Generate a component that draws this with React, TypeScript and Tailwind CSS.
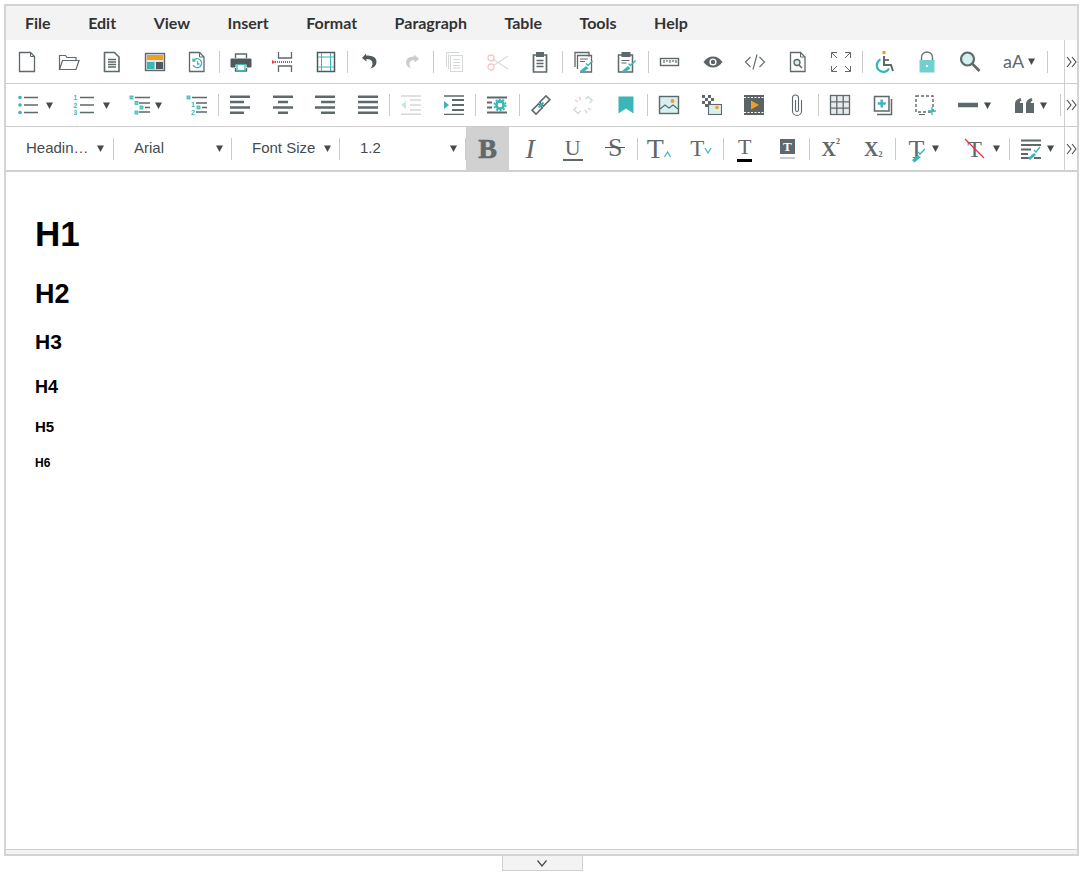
import React from "react";

const G = "#5f686a";
const T = "#3bb5b8";
const O = "#f0a020";
const R = "#ec3f52";

function Svg({ children, size = 24 }: { children: React.ReactNode; size?: number }) {
  return (
    <svg width={size} height={size} viewBox="0 0 24 24" fill="none" stroke={G} strokeWidth="1" className="shrink-0 block">
      {children}
    </svg>
  );
}

const icons: Record<string, React.ReactNode> = {
  file: <><path d="M4.500 2.500h11l4 4v15h-15z" strokeWidth="1.300" /><path d="M15.500 2.500v4h4" /></>,
  open: <><path d="M1.500 19.500v-14h6l1.500 2h9v3" strokeWidth="1.200" /><path d="M1.500 19.500l3-9h16.500l-3 9z" strokeWidth="1.200" /></>,
  doc: <><path d="M4.500 2.500h10l4.500 4.500v14.500h-14.500z" strokeWidth="1.600" /><path d="M8 9.500h8M8 12h8M8 14.500h8M8 17h8" strokeWidth="1.300" /></>,
  template: <><rect x="2.500" y="3.500" width="19" height="17" fill="#e4e4e4" strokeWidth="1.400" /><rect x="4" y="5" width="16" height="5" fill={O} stroke="none" /><rect x="4" y="12" width="7.500" height="7" fill={T} stroke="none" /><rect x="13" y="12" width="7" height="7" fill="#4f585a" stroke="none" /></>,
  restore: <><path d="M4.500 2.500h10l4.500 4.500v14.500h-14.500z" strokeWidth="1.300" /><path d="M14.500 2.500v4.500h4.500" /><path d="M8.500 10.500a4.500 4.500 0 1 1-.5 4.500M8 8.500v2.500h2.500M12.500 11v3h2" stroke={T} strokeWidth="1.300" /></>,
  print: <><path d="M6.500 8V4h11v4" strokeWidth="1.400" /><path d="M6.500 18v3h11v-3" strokeWidth="1.400" /><path d="M2 9h20v8h-4v-3H6v3H2z" fill="#4f585a" stroke="#4f585a" /><rect x="8" y="14.500" width="8" height="6" fill="#fff" stroke={T} strokeWidth="1.200" /></>,
  pagebreak: <><path d="M7.500 2v6h13V2M7.500 22v-6h13v6" strokeWidth="1.300" /><path d="M4 12h17" stroke={R} strokeWidth="2" strokeDasharray="1 1" /><path d="M1 10v4l3.500-2z" fill={R} stroke="none" /></>,
  frame: <><rect x="3.500" y="2.500" width="17" height="19" strokeWidth="1.500" stroke="#4f585a" /><path d="M7.500 3v18M16.500 3v18M4 7h16M4 17h16" stroke={T} /></>,
  undo: <path d="M9 3.500L5 8l4.500 3.500V9c4 0 6 1.500 6 4.500 0 2-1 3.500-2 5 4-1 6-3.500 6-7 0-4-4-6-10.500-6z" fill="#4f585a" stroke="none" />,
  redo: <path d="M14.500 4.500L19 9l-4.500 3.500V10c-3.500 0-5 1.500-5 4 0 2 .8 3.500 1.800 4.500-3.300-1-5.300-3.200-5.300-6 0-4 3.500-6 8.500-6z" fill="#c9cccc" stroke="none" />,
  copy: <g stroke="#d5d8d8"><path d="M3.500 17V2.500h13" /><path d="M5.500 19V4.500h1" /><rect x="7.500" y="5.500" width="12" height="16" /><path d="M10 9.500h7M10 12.500h7M10 15.500h7M10 18h7" /></g>,
  paste: <><path d="M8 5H5.500v17h13V5H16" strokeWidth="1.700" /><rect x="8.500" y="2.500" width="7" height="4" fill={G} /><path d="M8.500 10.500h7M8.500 13.500h7M8.500 16.500h7" strokeWidth="1.300" /></>,
  pastetext: <><path d="M3 17V2.500h14v4" strokeWidth="1.300" /><path d="M5.500 19V5.500H19.500V22H8" strokeWidth="1.300" /><path d="M8 9h8M8 11.500h5" strokeWidth="1" /><path d="M8 21l6-5 2.500 2.500-6 4z" fill={T} stroke="none" /><path d="M14 13.500l2 2 4.500-4.500" stroke={T} strokeWidth="1.500" /></>,
  pasteword: <><path d="M8 5H4.500v17h14V5H16" strokeWidth="1.500" /><rect x="8" y="2.500" width="8" height="4" fill={G} /><path d="M7.500 10.500h8M7.500 13h5" /><path d="M8 21l6-5 2.500 2.500-6 4z" fill={T} stroke="none" /><path d="M14.500 13.500l2 2 5-5" stroke={T} strokeWidth="1.500" /></>,
  ruler: <><rect x="2.500" y="8.500" width="18" height="7" strokeWidth="1.400" /><path d="M6 10v3M9 10v2M12 10v3M15 10v2M18 10v3" strokeWidth="1.200" /></>,
  eye: <><path d="M2.500 12c3-4 6-5.500 9.500-5.500s6.500 1.500 9.500 5.500c-3 4-6 5.500-9.500 5.500s-6.500-1.500-9.500-5.500z" fill="#5b6365" stroke="none" /><circle cx="12" cy="12" r="3.600" fill="#fff" stroke="none" /><circle cx="12" cy="12" r="2.200" fill="#5b6365" stroke="none" /></>,
  code: <path d="M7.500 7L2.500 12l5 5M16.500 7l5 5-5 5M14 4.500L10 19.500" strokeWidth="1.100" />,
  finddoc: <><path d="M4.500 2.500h10l4.500 4.500v14.500h-14.500z" strokeWidth="1.300" /><path d="M14.500 2.500v4.500h4.500" /><circle cx="11" cy="12.500" r="3" strokeWidth="1.300" fill="#d5eeee" /><path d="M13 15l3 3" strokeWidth="1.500" /></>,
  full: <path d="M2.500 8V2.500H8M3 3l5 5M16 2.500h5.500V8M21 3l-5 5M2.500 16v5.500H8M3 21l5-5M21.500 16v5.500H16M21 21l-5-5" strokeWidth="1" />,
  access: <><circle cx="11" cy="2.500" r="1.800" fill={O} stroke="none" /><path d="M11 6v9h7l2 6" stroke={G} strokeWidth="2" /><path d="M11 10h5" stroke={G} strokeWidth="1.800" /><path d="M7.500 9.500a6.500 6.500 0 1 0 8.500 9" stroke={T} strokeWidth="2.200" /></>,
  lock: <><path d="M6.500 11V7.500a5.500 5.500 0 0 1 11 0V11" strokeWidth="1.400" stroke="#6b7476" /><rect x="4.500" y="10" width="15" height="12.500" fill="#72cfcf" stroke="none" /><rect x="11" y="15" width="2" height="2" fill="#fff" stroke="none" /></>,
  search: <><circle cx="9.500" cy="9" r="6.500" fill="#d5eeee" strokeWidth="2.200" /><path d="M14.500 14L21.500 21" strokeWidth="2.600" /></>,
  bullets: <><path d="M9 4.500h14M9 12h14M9 19.500h14" strokeWidth="1.400" /><g fill={T} stroke="none"><circle cx="5" cy="4.500" r="1.800" /><circle cx="5" cy="12" r="1.800" /><circle cx="5" cy="19.500" r="1.800" /></g></>,
  numbers: <><path d="M10 4.500h14M10 12h14M10 19.500h14" strokeWidth="1.400" /><g fill={T} stroke="none" fontSize="6.500" fontWeight="700" fontFamily="Liberation Sans, sans-serif"><text x="3.500" y="7">1</text><text x="3.500" y="14.500">2</text><text x="3.500" y="22">3</text></g></>,
  outline: <><path d="M7 4.500h15M11 10h11M11 19h11M17 14.500h5" strokeWidth="1.400" /><g fill="#7ecfd0" stroke={T} strokeWidth=".8"><rect x="2" y="3" width="3" height="3" /><rect x="7" y="8.500" width="3" height="3" /><rect x="12" y="13" width="3" height="3" /><rect x="7" y="18" width="3" height="3" /></g></>,
  numoutline: <><path d="M7 4.500h15M11 10h11M11 19h11M17 14.500h5" strokeWidth="1.400" /><g fill="#7ecfd0" stroke={T} strokeWidth=".8"><rect x="2" y="3" width="3" height="3" /><rect x="12" y="13" width="3" height="3" /></g><g fill={T} stroke="none" fontSize="7" fontWeight="700" fontFamily="Liberation Sans, sans-serif"><text x="6" y="13.500">1</text><text x="6" y="22">2</text></g></>,
  left: <path d="M2 3.700h20M2 9h14M2 14.500h20M2 19.800h14" strokeWidth="2.500" />,
  center: <path d="M2 3.700h20M7 9h10M2 14.500h20M7 19.800h10" strokeWidth="2.500" />,
  right: <path d="M2 3.700h20M8 9h14M2 14.500h20M8 19.800h14" strokeWidth="2.500" />,
  justify: <path d="M2 3.700h20M2 9h20M2 14.500h20M2 19.800h20" strokeWidth="2.500" />,
  outdent: <><path d="M2 3h20M2 21.300h20M11 7h11M11 12h11M11 17h11" stroke="#d5d8d8" strokeWidth="1.600" /><path d="M7 8v8l-5-4z" fill="#c2e9e9" stroke="none" /></>,
  indent: <><path d="M2 3h20M2 21.300h20" strokeWidth="1.300" /><path d="M10 7h12M10 12h12M10 17h12" strokeWidth="2" /><path d="M2 8v8l5-4z" fill={T} stroke="none" /></>,
  settings: <><path d="M2 4.500h20M2 19.500h20M2 9.500h5M2 14.500h5" strokeWidth="2" /><circle cx="15" cy="12" r="3.600" fill="none" stroke={T} strokeWidth="2.600" /><circle cx="15" cy="12" r="5.600" fill="none" stroke={T} strokeWidth="1.800" strokeDasharray="2 1.500" /></>,
  link: <><rect x="13" y="3.500" width="5.500" height="9" transform="rotate(45 15.750 8)" strokeWidth="1.600" /><rect x="5.500" y="11.500" width="5.500" height="9" transform="rotate(45 8.250 16)" strokeWidth="1.600" /><path d="M9.500 14.500l5-5" stroke={T} strokeWidth="2" /></>,
  unlink: <><path d="M14.500 6l2.500-2.500 4 4L18.500 10" stroke="#d5d8d8" strokeWidth="1.500" /><path d="M9.500 18L7 20.500l-4-4L5.500 14" stroke="#d5d8d8" strokeWidth="1.500" /><path d="M17 15l3 2M14 17l2 3" stroke="#d5d8d8" strokeWidth="1.400" /><path d="M7 9L4 7M10 7L8 4" stroke="#f5c5c9" strokeWidth="1.400" /></>,
  bookmark: <path d="M4.500 3.500h15v17l-7.500-5-7.500 5z" fill={T} stroke="none" />,
  image: <><rect x="2.500" y="3.500" width="19" height="17" fill="#d6efef" strokeWidth="1.400" /><path d="M3 16l5-4 4 3 4-3 5 4" strokeWidth="1.100" /><circle cx="15.500" cy="8" r="2" fill={O} stroke="none" /></>,
  effects: <><g fill={G} stroke="none"><rect x="2" y="2" width="3" height="3" /><rect x="8" y="2" width="3" height="3" /><rect x="5" y="5" width="3" height="3" /><rect x="11" y="5" width="3" height="3" /><rect x="2" y="8" width="3" height="3" /><rect x="8" y="8" width="3" height="3" /><rect x="5" y="11" width="3" height="3" /></g><rect x="8.500" y="11.500" width="13" height="10" fill="#d6efef" strokeWidth="1.100" /><circle cx="17" cy="14.500" r="1.800" fill={O} stroke="none" /></>,
  video: <><rect x="2" y="2" width="20" height="20" fill="#5b6365" stroke="none" /><path d="M2 4.500h20M2 19.500h20" stroke="#fff" strokeWidth="1" strokeDasharray="2 1.500" /><path d="M9 7.500v9l8-4.500z" fill={O} stroke="none" /></>,
  attach: <path d="M16.500 7v11a4.500 4.500 0 0 1-9 0V5a3 3 0 0 1 6 0v12a1.500 1.500 0 0 1-3 0V7" strokeWidth="1.100" />,
  table: <><rect x="2.500" y="2.500" width="19" height="19" fill="#e9ecec" strokeWidth="1.300" /><path d="M8.800 3v18M15.200 3v18M3 8.800h18M3 15.200h18" strokeWidth="1.300" /></>,
  add: <><path d="M20.500 6v15.500H6" strokeWidth="1.500" /><rect x="3.500" y="3.500" width="14.500" height="14.500" fill="#fff" strokeWidth="1.500" /><path d="M10.700 6.500v8M6.700 10.500h8" stroke={T} strokeWidth="2.400" /></>,
  select: <><rect x="3" y="3" width="17" height="16" strokeWidth="1.400" strokeDasharray="3 2" /><path d="M19 14v8M15 18h8" stroke={T} strokeWidth="1.300" /><path d="M6 21.500h6" stroke={G} /></>,
  hr: <path d="M2 12h20" strokeWidth="4.500" />,
  quote: <path d="M3 20V11c0-3 2-5 5.500-6l1 2.500c-1.200.5-1.800 1.200-1.800 2.500H11v10zM14 20V11c0-3 2-5 5.500-6l1 2.500c-1.200.5-1.800 1.200-1.800 2.500H22v10z" fill={G} stroke="none" />,
};

function Serif({ ch, size, bold = true, italic = false }: { ch: string; size: number; bold?: boolean; italic?: boolean }) {
  return (
    <span
      className="font-['Liberation_Serif',serif] leading-none text-[#5f686a]"
      style={{ fontSize: size, fontWeight: bold ? 700 : 400, fontStyle: italic ? "italic" : "normal" }}
    >
      {ch}
    </span>
  );
}

function I({ n }: { n: string }) {
  return <Svg>{icons[n]}</Svg>;
}

function Tri({ className = "ml-[7px]" }: { className?: string }) {
  return (
    <svg width="7" height="7" viewBox="0 0 7 7" className={`shrink-0 ${className}`}>
      <path d="M0 .5h7L3.500 7z" fill="#444b4d" />
    </svg>
  );
}

function Cell({ children, className = "w-[42.5px]" }: { children?: React.ReactNode; className?: string }) {
  return <div className={`flex h-full shrink-0 items-center justify-center ${className}`}>{children}</div>;
}

function Left({ children, className }: { children?: React.ReactNode; className: string }) {
  return <div className={`flex h-full shrink-0 items-center ${className}`}>{children}</div>;
}

function Sep() {
  return <div className="h-[22px] w-px shrink-0 bg-[#cbcbcb]" />;
}

function Cells({ names, className }: { names: string[]; className?: string }) {
  return (
    <>
      {names.map((n) => (
        <Cell key={n} className={className}>
          <I n={n} />
        </Cell>
      ))}
    </>
  );
}

function More() {
  return (
    <div className="ml-auto flex h-full w-[13px] shrink-0 items-center justify-center border-l border-[#cfcfcf]">
      <svg width="11" height="12" viewBox="0 0 11 12" fill="none" stroke="#444b4d" strokeWidth="1.100">
        <path d="M1 1l4 5-4 5M6 1l4 5-4 5" />
      </svg>
    </div>
  );
}

function Sel({ text, className, textClass }: { text: string; className: string; textClass: string }) {
  return (
    <div className={`flex h-full shrink-0 items-center text-[15px] text-[#444c52] ${className}`}>
      <span className={textClass}>{text}</span>
      <Tri className="" />
    </div>
  );
}

const menus = ["File", "Edit", "View", "Insert", "Format", "Paragraph", "Table", "Tools", "Help"];

export default function App() {
  return (
    <div className="h-[873px] w-[1084px] overflow-hidden bg-white pl-[4px] pt-[4px] font-['Liberation_Sans',Arial,sans-serif]">
      <div className="flex h-[852px] w-[1075px] flex-col border-2 border-[#d4d4d4]">
        <div className="flex h-[34px] shrink-0 items-center gap-[37.5px] bg-[#f3f3f3] pl-[19px] font-['Lato',sans-serif] text-[16px] font-bold text-[#333]">
          {menus.map((m) => (
            <span key={m}>{m}</span>
          ))}
        </div>

        <div className="flex h-[44px] shrink-0 items-center border-b border-[#cdcdcd]">
          <Cells names={["file", "open", "doc", "template", "restore"]} />
          <Sep />
          <Cells names={["print", "pagebreak", "frame"]} />
          <Sep />
          <Cells names={["undo", "redo"]} />
          <Sep />
          <Cell><I n="copy" /></Cell>
          <Cell>
            <svg width="24" height="24" viewBox="0 0 24 24" fill="none" stroke="#f5c5c9" strokeWidth="1.300">
              <circle cx="5" cy="8" r="3" />
              <circle cx="5" cy="17" r="3" />
              <path d="M7.500 9.500L22 19M7.500 15.500L22 6" stroke="#d9dcdc" />
            </svg>
          </Cell>
          <Cell><I n="paste" /></Cell>
          <Sep />
          <Cells names={["pastetext", "pasteword"]} />
          <Sep />
          <Cells names={["ruler", "eye", "code", "finddoc", "full"]} className="w-[42.8px]" />
          <Sep />
          <Cells names={["access", "lock", "search"]} />
          <Left className="w-[56px] pl-[12px]">
            <span className="font-['Lato',sans-serif] text-[18px] text-[#5f686a]">aA</span>
            <Tri className="ml-[4px]" />
          </Left>
          <Sep />
          <More />
        </div>

        <div className="flex h-[43px] shrink-0 items-center border-b border-[#cdcdcd]">
          <Left className="w-[56px] pl-[9px]"><I n="bullets" /><Tri className="ml-[7px]" /></Left>
          <Left className="w-[58px] pl-[8px]"><I n="numbers" /><Tri className="ml-[9px]" /></Left>
          <Left className="w-[55px] pl-[8px]"><I n="outline" /><Tri className="ml-[3px]" /></Left>
          <Cell className="w-[43px]"><I n="numoutline" /></Cell>
          <Sep />
          <Cells names={["left", "center", "right", "justify"]} />
          <Sep />
          <Cells names={["outdent", "indent"]} />
          <Sep />
          <Cell><I n="settings" /></Cell>
          <Sep />
          <Cells names={["link", "unlink", "bookmark"]} />
          <Sep />
          <Cells names={["image", "effects", "video", "attach"]} />
          <Sep />
          <Cells names={["table", "add", "select"]} />
          <Left className="w-[56px] pl-[9px]"><I n="hr" /><Tri className="ml-[4px]" /></Left>
          <Left className="w-[57px] pl-[9px]"><I n="quote" /><Tri className="ml-[4px]" /></Left>
          <Sep />
          <More />
        </div>

        <div className="flex h-[45px] shrink-0 items-center border-b-2 border-[#d0d0d0]">
          <Sel text="Headin…" className="w-[107px] pl-[20px]" textClass="w-[71px]" />
          <Sep />
          <Sel text="Arial" className="w-[117px] pl-[20px]" textClass="w-[82px]" />
          <Sep />
          <Sel text="Font Size" className="w-[107px] pl-[20px]" textClass="w-[72px]" />
          <Sep />
          <Sel text="1.2" className="w-[125px] pl-[20px]" textClass="w-[90px]" />
          <Sep />
          <Cell className="w-[43px] bg-[#d1d1d1]">
            <span className="font-['Liberation_Serif',serif] text-[28px] font-bold leading-none text-[#5f686a] [-webkit-text-stroke:0.6px_#5f686a]">B</span>
          </Cell>
          <Cell><Serif ch="I" size={28} bold={false} italic /></Cell>
          <Cell>
            <span className="flex w-[20px] justify-center border-b-2 border-[#5f686a] leading-none"><Serif ch="U" size={22} bold={false} /></span>
          </Cell>
          <Cell>
            <span className="relative"><Serif ch="S" size={26} bold={false} /><span className="absolute left-[-3px] right-[-3px] top-[12px] h-[1.500px] bg-[#4f585a]" /></span>
          </Cell>
          <Sep />
          <Cell><Serif ch="T" size={28} bold={false} /><svg width="7" height="7" viewBox="0 0 7 7" fill="none" stroke={T} strokeWidth="1.200" className="mt-[12px]"><path d="M.5 6l3-5 3 5" /></svg></Cell>
          <Cell><Serif ch="T" size={23} bold={false} /><svg width="8" height="7" viewBox="0 0 8 7" fill="none" stroke={T} strokeWidth="1.200" className="mt-[3px]"><path d="M1 1l3 5 3-5" /></svg></Cell>
          <Sep />
          <Cell>
            <span className="flex flex-col items-center"><Serif ch="T" size={22} bold={false} /><span className="mt-[1px] h-[3px] w-[15px] bg-black" /></span>
          </Cell>
          <Cell>
            <span className="flex flex-col items-center">
              <span className="flex h-[15px] w-[15px] items-center justify-center bg-[#5f686a] font-['Liberation_Serif',serif] text-[13px] font-bold leading-none text-white">T</span>
              <span className="mt-[3px] h-[2px] w-[15px] bg-[#c9cccc]" />
            </span>
          </Cell>
          <Sep />
          <Cell><Serif ch="X" size={20} /><sup className="mt-[-6px] font-['Liberation_Serif',serif] text-[8px] font-bold text-[#5f686a]">2</sup></Cell>
          <Cell><Serif ch="X" size={20} /><sub className="mt-[8px] font-['Liberation_Serif',serif] text-[8px] font-bold text-[#5f686a]">2</sub></Cell>
          <Sep />
          <Left className="w-[56px] pl-[12px]">
            <span className="relative flex h-[24px] w-[18px] justify-center">
              <Serif ch="T" size={26} bold={false} />
              <svg width="18" height="18" viewBox="0 0 18 18" className="absolute left-[2px] top-[8px]" fill="none"><path d="M2 15l6-5 2.500 2.500-6 5z" fill={T} /><path d="M8 7l2 2 5-5" stroke={T} strokeWidth="1.400" /></svg>
            </span>
            <Tri className="ml-[6px]" />
          </Left>
          <Left className="w-[57px] pl-[12px]">
            <span className="relative flex h-[24px] w-[22px] justify-center">
              <Serif ch="T" size={24} bold={false} />
              <svg width="22" height="22" viewBox="0 0 22 22" className="absolute left-0 top-[1px]"><path d="M1 1l19 19" stroke="#ef2f45" strokeWidth="1.200" /></svg>
            </span>
            <Tri className="ml-[7px]" />
          </Left>
          <Sep />
          <Left className="w-[54px] pl-[10px]">
            <svg width="22" height="22" viewBox="0 0 22 22" fill="none" stroke={G} className="shrink-0">
              <path d="M1 2.500h20M1 7h20M1 11.500h10M1 16h7M1 20h9M14 20h7" strokeWidth="1.800" />
              <path d="M8 20l6-5 2 2-6 5z" fill={T} stroke="none" />
              <path d="M14 12l2 2 4-5" stroke={T} strokeWidth="1.400" />
            </svg>
            <Tri className="ml-[5px]" />
          </Left>
          <More />
        </div>

        <div className="min-h-0 flex-1 pl-[29px] pt-[42px] font-bold text-black">
          <h1 className="text-[35px] leading-[40px]">H1</h1>
          <h2 className="mt-[24px] text-[27px] leading-[32px]">H2</h2>
          <h3 className="mt-[19px] text-[21px] leading-[26px]">H3</h3>
          <h4 className="mt-[21px] text-[18px] leading-[22px]">H4</h4>
          <h5 className="mt-[20px] text-[15px] leading-[18px]">H5</h5>
          <h6 className="mt-[20px] text-[12px] leading-[14px]">H6</h6>
        </div>

        <div className="h-[5px] shrink-0 border-t border-[#cfcfcf] bg-[#f3f3f3]" />
      </div>
      <div className="flex w-[1075px] justify-center pl-[1px]">
        <div className="flex h-[15px] w-[81px] items-center justify-center border-x border-b border-[#cfcfcf] bg-[#f3f3f3]">
          <svg width="10" height="7" viewBox="0 0 10 7" fill="none" stroke="#444b4d" strokeWidth="1.200"><path d="M.5 .5L5 6 9.500 .5" /></svg>
        </div>
      </div>
    </div>
  );
}
